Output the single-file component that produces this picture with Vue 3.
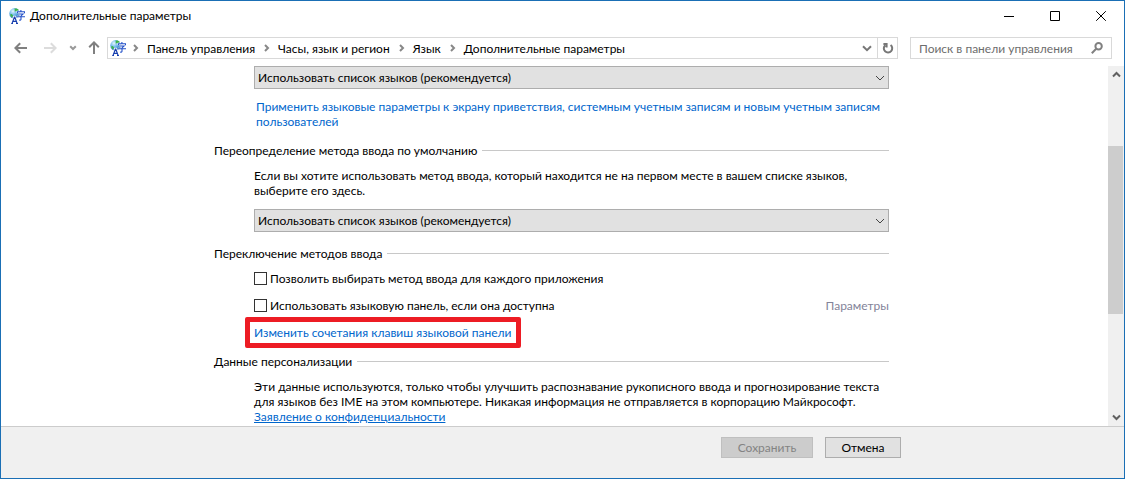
<script setup>
import { ref } from 'vue'

const crumbs = ['Панель управления', 'Часы, язык и регион', 'Язык', 'Дополнительные параметры']
const languageOption = 'Использовать список языков (рекомендуется)'
const displayLanguage = ref(languageOption)
const inputMethod = ref(languageOption)
const perApp = ref(false)
const languageBar = ref(false)
</script>

<template>
  <div class="window">
    <svg class="defs" aria-hidden="true">
      <defs>
        <radialGradient id="globe" cx="0.35" cy="0.3" r="0.8">
          <stop offset="0" stop-color="#e4f6ff" />
          <stop offset="0.45" stop-color="#6cb6e8" />
          <stop offset="1" stop-color="#1c62b4" />
        </radialGradient>
        <symbol id="lang" viewBox="0 0 16 16">
          <circle cx="5.6" cy="5.4" r="5.3" fill="url(#globe)" />
          <path d="M5.6 .6C7 .2 8.6.7 9.6 1.6L8.4 3.2 6.8 3 5.8 3.8ZM1 6.4l1.8-.4L4 7.4 3.4 9.2 2 8.8Z" fill="#3fb54a" />
          <path d="M11.9 2v1.6M8.5 5.2V3.8h7v1.4M9.6 6h4.4l-2 1.8M8 8.8h8M12 7.8v3.4q0 1.2-1.8.9" fill="none" stroke="#fff" stroke-width="2" />
          <path d="M11.9 2v1.6M8.5 5.2V3.8h7v1.4M9.6 6h4.4l-2 1.8M8 8.8h8M12 7.8v3.4q0 1.2-1.8.9" fill="none" stroke="#2350c8" stroke-width="1.1" />
          <path d="M3 15.6 5.4 9.2h.4l2.4 6.4M4 13.4h3.4" fill="none" stroke="#fff" stroke-width="3" />
          <path d="M3 15.6 5.4 9.2h.4l2.4 6.4M4 13.4h3.4M2.2 15.5h1.8M7 15.5h2" fill="none" stroke="#183fae" stroke-width="1.2" />
        </symbol>
      </defs>
    </svg>

    <header class="titlebar">
      <svg class="app-icon"><use href="#lang" /></svg>
      <h1>Дополнительные параметры</h1>
      <div class="window-buttons">
        <button type="button" aria-label="Свернуть">
          <svg viewBox="0 0 10 10"><path d="M0 5.5h10" /></svg>
        </button>
        <button type="button" aria-label="Развернуть">
          <svg viewBox="0 0 10 10"><path d="M.5 .5h9v9h-9z" /></svg>
        </button>
        <button type="button" aria-label="Закрыть">
          <svg viewBox="0 0 10 10"><path d="M.2 .2l9.6 9.6M9.8 .2L.2 9.8" /></svg>
        </button>
      </div>
    </header>

    <nav class="toolbar">
      <div class="history">
        <button type="button" class="back" aria-label="Назад">
          <svg width="14" height="12" viewBox="0 0 14 12"><path d="M13 6H2M6.2 1.2 1.4 6l4.8 4.8" /></svg>
        </button>
        <button type="button" class="forward" aria-label="Вперёд" disabled>
          <svg width="14" height="12" viewBox="0 0 14 12"><path d="M1 6h11M7.8 1.2 12.6 6l-4.8 4.8" /></svg>
        </button>
        <button type="button" class="recent" aria-label="Последние расположения">
          <svg width="8" height="6" viewBox="0 0 8 6"><path d="M1.2 1.2 4 4l2.8-2.8" /></svg>
        </button>
        <button type="button" class="up" aria-label="Вверх">
          <svg width="12" height="14" viewBox="0 0 12 14"><path d="M6 13V2M1.2 6.2 6 1.4l4.8 4.8" /></svg>
        </button>
      </div>
      <div class="address">
        <svg class="app-icon"><use href="#lang" /></svg>
        <ol>
          <li v-for="crumb in crumbs" :key="crumb">
            <svg width="6" height="8" viewBox="0 0 6 8"><path d="M1 1l3 3-3 3" /></svg>
            <a href="#">{{ crumb }}</a>
          </li>
        </ol>
        <button type="button" class="drop" aria-label="Предыдущие расположения">
          <svg width="10" height="7" viewBox="0 0 10 7"><path d="M1 1.2l4 4 4-4" /></svg>
        </button>
        <button type="button" class="refresh" aria-label="Обновить">
          <svg width="12" height="12" viewBox="0 0 12 12"><path d="M8.6 3A4.2 4.2 0 1 1 3.2 3.2M1.4 1.9h3.2v3.6" /></svg>
        </button>
      </div>
      <div class="search">
        <input type="search" placeholder="Поиск в панели управления" aria-label="Поиск в панели управления" />
        <svg width="12" height="12" viewBox="0 0 12 12"><circle cx="7.6" cy="4.2" r="3.2" /><path d="M5.2 6.8.8 11.2" /></svg>
      </div>
    </nav>

    <div class="body">
      <main>
        <div class="content">
          <section class="indent">
            <div class="combo">
              <select v-model="displayLanguage" aria-label="Язык интерфейса">
                <option>{{ languageOption }}</option>
              </select>
              <svg width="10" height="6" viewBox="0 0 10 6"><path d="M1 1l4 4 4-4" /></svg>
            </div>
            <a class="apply" href="#">Применить языковые параметры к экрану приветствия, системным учетным записям и новым учетным записям пользователей</a>
          </section>

          <section>
            <h2>Переопределение метода ввода по умолчанию</h2>
            <div class="indent">
              <p id="override">Если вы хотите использовать метод ввода, который находится не на первом месте в вашем списке языков, выберите его здесь.</p>
              <div class="combo spaced">
                <select v-model="inputMethod" aria-labelledby="override">
                  <option>{{ languageOption }}</option>
                </select>
                <svg width="10" height="6" viewBox="0 0 10 6"><path d="M1 1l4 4 4-4" /></svg>
              </div>
            </div>
          </section>

          <section>
            <h2>Переключение методов ввода</h2>
            <div class="indent switches">
              <label><input v-model="perApp" type="checkbox" />Позволить выбирать метод ввода для каждого приложения</label>
              <div class="row">
                <label><input v-model="languageBar" type="checkbox" />Использовать языковую панель, если она доступна</label>
                <span class="disabled">Параметры</span>
              </div>
              <a class="hotkeys" href="#">Изменить сочетания клавиш языковой панели</a>
            </div>
          </section>

          <section>
            <h2>Данные персонализации</h2>
            <div class="indent">
              <p>Эти данные используются, только чтобы улучшить распознавание рукописного ввода и прогнозирование текста для языков без IME на этом компьютере. Никакая информация не отправляется в корпорацию Майкрософт.</p>
              <a class="privacy" href="#">Заявление о конфиденциальности</a>
            </div>
          </section>
        </div>
      </main>
      <div class="scrollbar">
        <button type="button" aria-label="Прокрутить вверх">
          <svg width="9" height="7" viewBox="0 0 9 7"><path d="M1 5.5 4.5 2 8 5.5" /></svg>
        </button>
        <div class="track"><div class="thumb"></div></div>
        <button type="button" aria-label="Прокрутить вниз">
          <svg width="9" height="7" viewBox="0 0 9 7"><path d="M1 1.5 4.5 5 8 1.5" /></svg>
        </button>
      </div>
    </div>

    <footer>
      <div class="actions">
        <button type="button" class="save" disabled>Сохранить</button>
        <button type="button" class="cancel">Отмена</button>
      </div>
    </footer>
  </div>
</template>

<style>
body {
  margin: 0;
}
</style>

<style scoped>
* {
  box-sizing: border-box;
}
.window {
  display: flex;
  flex-direction: column;
  min-height: 100vh;
  border: 1px solid #1a6fb5;
  background: #fff;
  color: #000;
  font: 12px/15px Lato, "Noto Sans", sans-serif;
}
.defs {
  position: absolute;
  width: 0;
  height: 0;
}
h1,
h2,
p,
ol {
  margin: 0;
  padding: 0;
  font: inherit;
}
button,
input,
select {
  margin: 0;
  font: inherit;
  color: inherit;
}
button {
  display: flex;
  align-items: center;
  justify-content: center;
  padding: 0;
  border: 0;
  background: none;
}
svg {
  flex: none;
  fill: none;
  stroke: currentColor;
}
a {
  color: #0066cc;
  text-decoration: none;
}
.app-icon {
  width: 16px;
  height: 16px;
  stroke: none;
}
.titlebar {
  display: flex;
  align-items: center;
  height: 29px;
  padding-left: 8px;
}
.titlebar h1 {
  flex: 1;
  margin-left: 5px;
}
.window-buttons {
  display: flex;
}
.window-buttons button {
  width: 46px;
  height: 29px;
}
.window-buttons svg {
  width: 10px;
  height: 10px;
}
.toolbar {
  display: flex;
  align-items: center;
  height: 36px;
  padding: 0 12px;
}
.history {
  display: flex;
  align-items: center;
  width: 94px;
  color: #808080;
}
.history svg {
  stroke-width: 2;
}
.back {
  width: 16px;
}
.forward {
  width: 16px;
  margin-left: 13px;
  color: #dcdcdc;
}
.recent {
  width: 8px;
  margin-left: 11px;
  color: #999;
}
.up {
  width: 12px;
  margin-left: 11px;
}
.address {
  display: flex;
  flex: 1;
  align-items: center;
  height: 22px;
  padding-left: 2px;
  border: 1px solid #d9d9d9;
}
.address ol {
  display: flex;
  flex: 1;
  gap: 2px;
  list-style: none;
}
.address li {
  display: flex;
  align-items: center;
}
.address li svg {
  margin: 0 8px 0 7px;
  color: #888;
  stroke-width: 2;
}
.address a {
  color: #000;
}
.drop {
  width: 20px;
  height: 20px;
  color: #777;
}
.drop svg,
.refresh svg {
  stroke-width: 2;
}
.refresh {
  width: 20px;
  height: 20px;
  border-left: 1px solid #d9d9d9;
  color: #777;
}
.search {
  display: flex;
  align-items: center;
  width: 202px;
  height: 22px;
  margin-left: 12px;
  padding: 0 8px;
  border: 1px solid #d9d9d9;
  color: #808080;
}
.search input {
  flex: 1;
  min-width: 0;
  padding: 0;
  border: 0;
  outline: 0;
  background: none;
  appearance: none;
}
.search input::placeholder {
  color: #6d6d6d;
  opacity: 1;
}
.search svg {
  stroke-width: 2;
}
.body {
  display: flex;
  flex: 1;
}
main {
  flex: 1;
  min-width: 0;
  padding: 0 6px 2px 0;
}
.content {
  max-width: 675px;
  margin: 0 auto;
}
.indent {
  padding-left: 40px;
}
.combo {
  display: grid;
  align-items: center;
}
.combo select,
.combo svg {
  grid-area: 1 / 1;
}
.combo svg {
  justify-self: end;
  margin-right: 4px;
  color: #444;
  pointer-events: none;
}
.combo select {
  width: 100%;
  height: 23px;
  padding: 0 20px 0 3px;
  border: 1px solid #adadad;
  border-radius: 0;
  background: #e1e1e1;
  appearance: none;
}
.spaced {
  margin-top: 11px;
}
.apply {
  display: block;
  margin-top: 10px;
  padding-left: 2px;
}
h2 {
  display: flex;
  align-items: center;
  gap: 5px;
  margin: 14px 0 10px;
}
h2::after {
  content: "";
  flex: 1;
  height: 1px;
  background: #c8c8c8;
}
.switches {
  display: flex;
  flex-direction: column;
  gap: 12px;
}
label {
  display: flex;
  align-items: center;
  gap: 3px;
}
input[type="checkbox"] {
  width: 13px;
  height: 13px;
  border: 1px solid #333;
  background: #fff;
  appearance: none;
}
input[type="checkbox"]:checked {
  box-shadow: inset 0 0 0 2px #fff;
  background: #333;
}
.row {
  display: flex;
  justify-content: space-between;
}
.disabled {
  color: #838399;
}
.hotkeys {
  position: relative;
  align-self: flex-start;
}
.hotkeys::before {
  content: "";
  position: absolute;
  inset: -8px -10px -8px -9px;
  border: 5px solid #ed1c24;
  border-radius: 2px;
}
.privacy {
  display: block;
  width: fit-content;
  text-decoration: underline;
}
.scrollbar {
  display: flex;
  flex-direction: column;
  width: 16px;
  background: #f0f0f0;
  color: #606060;
}
.scrollbar button {
  height: 17px;
}
.scrollbar svg {
  stroke-width: 2;
}
.track {
  flex: 1;
  padding-top: 63px;
}
.thumb {
  width: 15px;
  height: 168px;
  background: #cdcdcd;
}
footer {
  height: 52px;
  padding-top: 10px;
  border-top: 1px solid #ccc;
  background: #f0f0f0;
}
.actions {
  display: flex;
  justify-content: flex-end;
  gap: 12px;
  max-width: 677px;
  margin: 0 auto;
}
.actions button {
  height: 21px;
  border: 1px solid #adadad;
  background: #e1e1e1;
}
.actions .save {
  width: 92px;
  border-color: #bfbfbf;
  background: #ccc;
  color: #838383;
}
.actions .cancel {
  width: 76px;
}
</style>
